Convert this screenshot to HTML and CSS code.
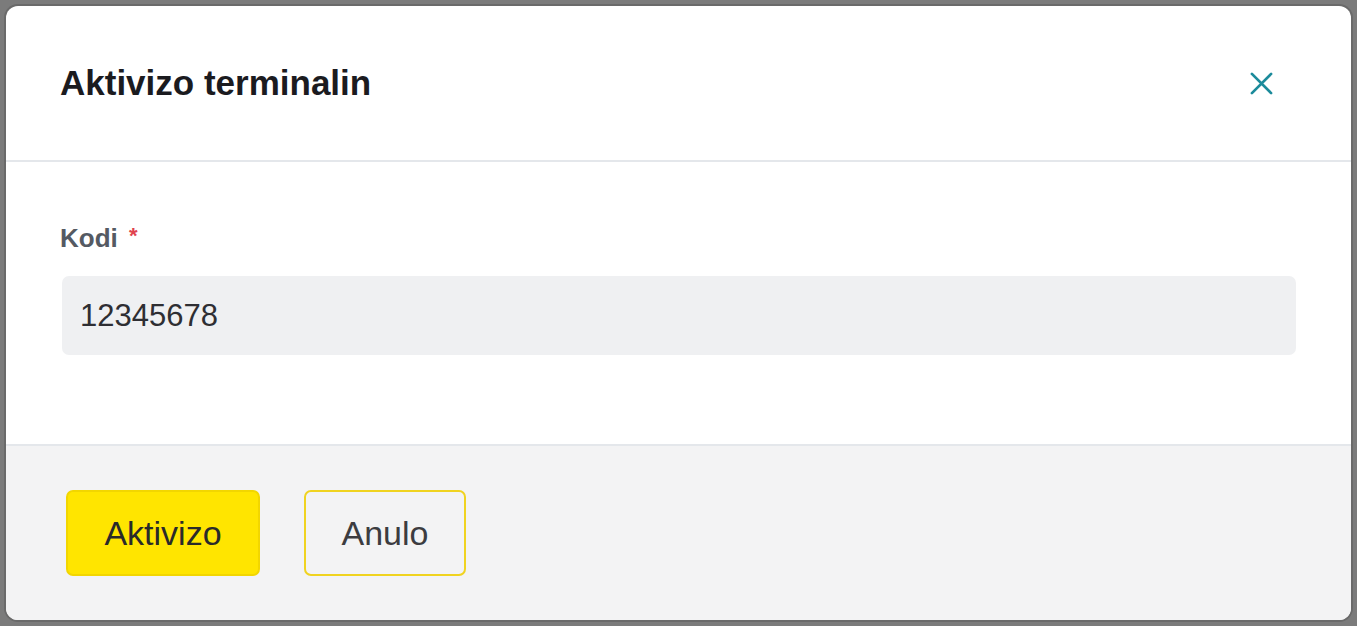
FILE: index.html
```html
<!DOCTYPE html>
<html lang="sq">
<head>
  <meta charset="UTF-8" />
  <meta name="viewport" content="width=device-width, initial-scale=1.0"/>
  <title>Aktivizo terminalin</title>
  <link rel="stylesheet" href="styles.css">
</head>
<body>

  <div class="backdrop">
    <div class="modal">
      <div class="modal-header">
        <h2>Aktivizo terminalin</h2>
        <button class="close-btn" aria-label="Mbyll">
          <svg width="23" height="23" viewBox="0 0 24 24" fill="none" stroke="#1c8b9b" stroke-width="2.8" stroke-linecap="round">
            <path d="M2 2 L22 22 M22 2 L2 22" />
          </svg>
        </button>
      </div>

      <div class="modal-body">
        <label for="code">Kodi <span class="required">*</span></label>
        <input type="text" id="code" value="12345678" />
      </div>

      <div class="modal-footer">
        <button class="btn btn-primary">Aktivizo</button>
        <button class="btn btn-outline">Anulo</button>
      </div>
    </div>
  </div>

</body>
</html>
```

FILE: styles.css
```css
body {
  margin: 0;
  padding: 0;
  font-family: 'Liberation Sans', Arial, sans-serif;
  background: #7b7b7b;
}

.backdrop {
  height: 626px;
  padding: 6px;
  box-sizing: border-box;
}

.modal {
  height: 614px;
  background: white;
  border-radius: 12px;
  box-shadow: 0 0 0 2px #6a6a6a;
  display: flex;
  flex-direction: column;
  overflow: hidden;
}

.modal-header {
  height: 154px;
  border-bottom: 2px solid #e4e7eb;
  display: flex;
  align-items: center;
  justify-content: space-between;
  padding: 0 78px 0 54px;
}

.modal-header h2 {
  margin: 0;
  font-size: 35px;
  font-weight: bold;
  color: #1b1b1f;
}

.close-btn {
  border: none;
  background: none;
  padding: 0;
  cursor: pointer;
  display: flex;
}

.modal-body {
  flex: 1;
  padding: 61px 55px 0 56px;
  border-bottom: 2px solid #e4e7eb;
}

label {
  display: block;
  font-size: 26px;
  font-weight: bold;
  color: #545a63;
  margin: 0 0 22px -2px;
}

.required {
  color: #e0434f;
  font-size: 22px;
  margin-left: 4px;
  vertical-align: 4px;
}

input {
  display: block;
  width: 100%;
  box-sizing: border-box;
  height: 79px;
  padding: 0 18px;
  border: none;
  border-radius: 7px;
  background: #eff0f2;
  font-family: 'Liberation Sans', Arial, sans-serif;
  font-size: 31px;
  color: #2e2e33;
}

.modal-footer {
  height: 174px;
  background: #f3f3f4;
  display: flex;
  align-items: center;
  gap: 44px;
  padding: 0 60px;
}

.btn {
  height: 86px;
  font-family: 'Liberation Sans', Arial, sans-serif;
  font-size: 34px;
  border-radius: 7px;
  cursor: pointer;
  color: #2a2a2a;
  padding: 0;
}

.btn-primary {
  width: 194px;
  background: #ffe500;
  border: 2px solid #f2d600;
}

.btn-outline {
  width: 162px;
  background: transparent;
  border: 2px solid #f0d320;
  color: #3c3c40;
}
```
